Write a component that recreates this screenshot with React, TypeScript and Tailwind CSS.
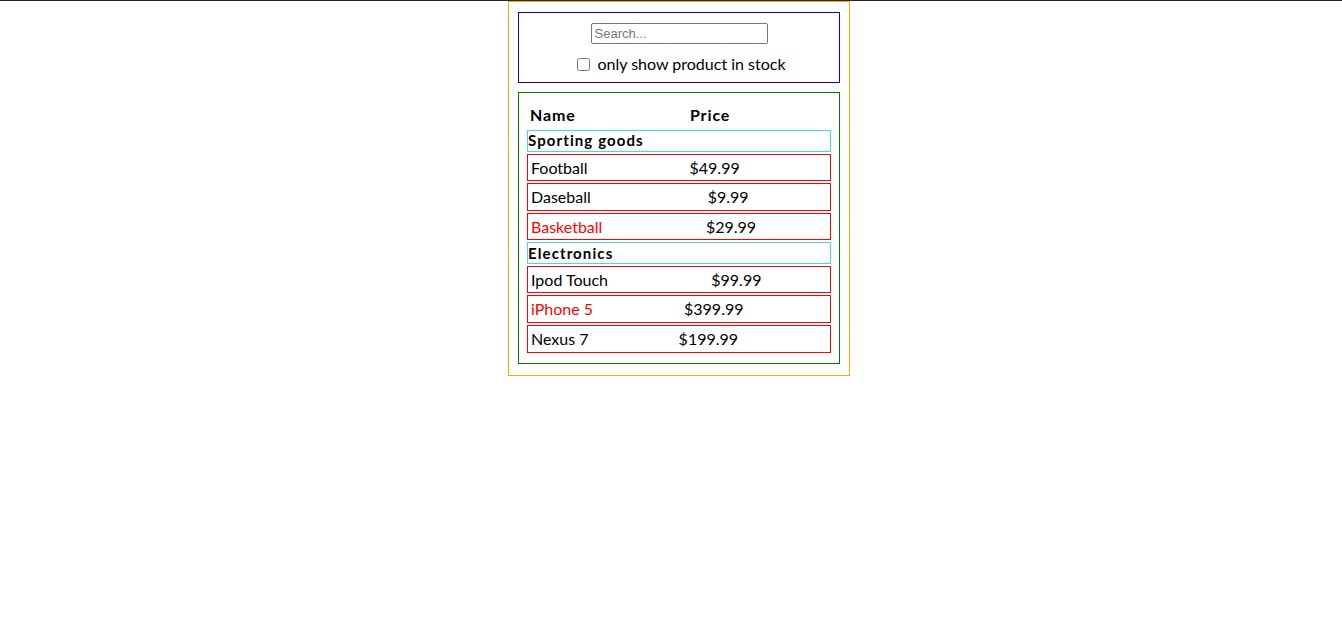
import { useState } from "react";

type Product = { category: string; price: string; stocked: boolean; name: string };

const PRODUCTS: Product[] = [
  { category: "Sporting goods", price: "$49.99", stocked: true, name: "Football" },
  { category: "Sporting goods", price: "$9.99", stocked: true, name: "Daseball" },
  { category: "Sporting goods", price: "$29.99", stocked: false, name: "Basketball" },
  { category: "Electronics", price: "$99.99", stocked: true, name: "Ipod Touch" },
  { category: "Electronics", price: "$399.99", stocked: false, name: "iPhone 5" },
  { category: "Electronics", price: "$199.99", stocked: true, name: "Nexus 7" },
];

function CategoryRow({ category }: { category: string }) {
  return (
    <div className="h-[21.5px] border border-[#40e0d0] flex items-center font-bold text-[15px] leading-none tracking-[1.1px]">
      {category}
    </div>
  );
}

function ProductRow({ product }: { product: Product }) {
  return (
    <table className="w-full border border-[#ff0000] border-separate border-spacing-[2px] leading-[19.6px]">
      <tbody>
        <tr>
          <td className={`p-[1px] ${product.stocked ? "text-black" : "text-[#ff0000]"}`}>{product.name}</td>
          <td className="p-[1px]">{product.price}</td>
        </tr>
      </tbody>
    </table>
  );
}

export default function App() {
  const [filter, setFilter] = useState("");
  const [inStock, setInStock] = useState(false);

  const rows: JSX.Element[] = [];
  let last = "";
  PRODUCTS.forEach((p) => {
    if (p.category !== last) {
      rows.push(<CategoryRow key={p.category} category={p.category} />);
      last = p.category;
    }
    rows.push(<ProductRow key={p.name} product={p} />);
  });

  return (
    <div className="min-h-[621px] bg-white border-t border-[#222222] text-black font-['Lato',sans-serif] text-[16px]">
      {/* FilterableProductTable */}
      <div className="ml-[508px] w-[342px] border border-[#ffa500] pt-[10px] px-[9px] pb-[11px]">
        {/* SearchBar */}
        <div className="border border-[#0000ff] pt-[10px] pb-[7px] flex flex-col items-center">
          <input
            type="text"
            value={filter}
            onChange={(e) => setFilter(e.target.value)}
            placeholder="Search..."
            className="w-[177px] h-[21px] border border-[#767676] rounded-[2px] px-[3px] text-[13px] font-['Liberation_Sans',sans-serif] placeholder:text-[#757575] outline-none"
          />
          <label className="mt-[9px] ml-[5px] flex items-center leading-[22px]">
            <input
              type="checkbox"
              checked={inStock}
              onChange={(e) => setInStock(e.target.checked)}
              className="w-[13px] h-[13px] mr-[7px]"
            />
            <span>only show product in stock</span>
          </label>
        </div>

        {/* ProductTable */}
        <div className="mt-[9px] border border-[#008000] px-[8px] pt-[8px] pb-[10px] flex flex-col gap-[2px]">
          <table className="w-full border-separate border-spacing-[2px] leading-[21px]">
            <thead>
              <tr>
                <th className="p-[1px] text-left font-bold tracking-[0.9px]">Name</th>
                <th className="p-[1px] text-left font-bold tracking-[0.9px]">Price</th>
              </tr>
            </thead>
          </table>
          {rows}
        </div>
      </div>
    </div>
  );
}
